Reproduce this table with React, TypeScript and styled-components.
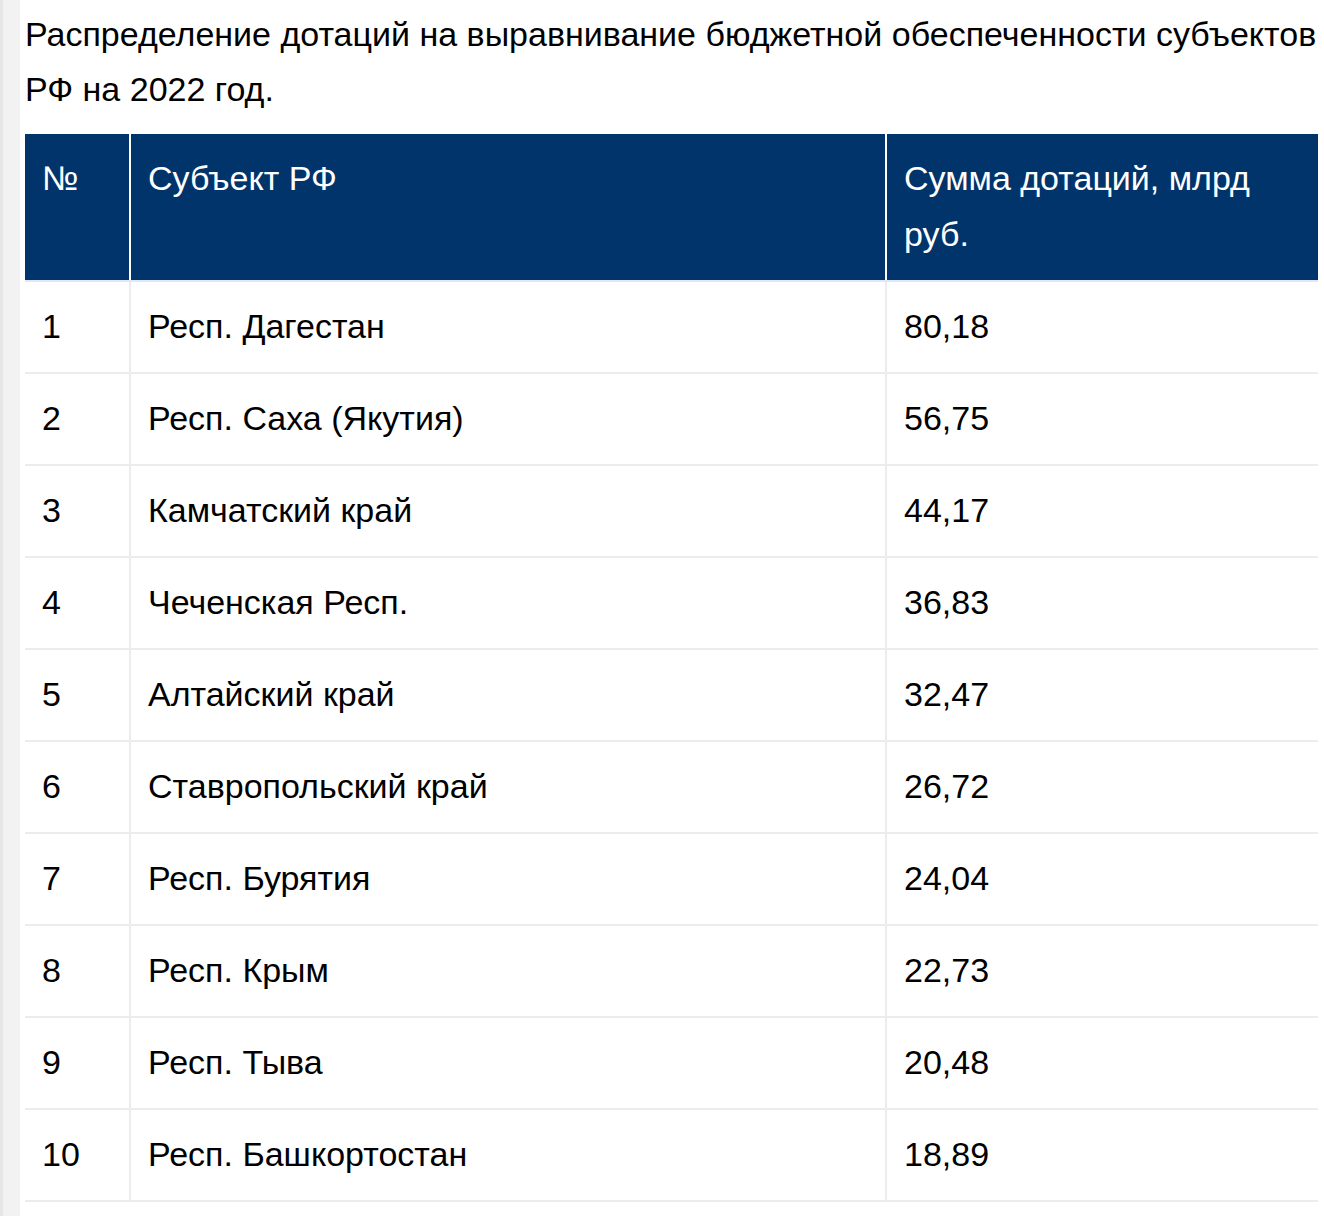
import styled, { createGlobalStyle } from "styled-components";

const GlobalStyle = createGlobalStyle`
  html, body {
    margin: 0;
    padding: 0;
    background: #ffffff;
  }
  body {
    font-family: "Liberation Sans", Arial, sans-serif;
    color: #000000;
  }
  * {
    box-sizing: border-box;
  }
`;

const Page = styled.div`
  display: flex;
  min-height: 1216px;
`;

const SideStrip = styled.div`
  width: 20px;
  flex-shrink: 0;
  background: #f2f2f2;
  border-left: 3px solid #e6e6e6;
`;

const Content = styled.div`
  flex: 1;
  padding: 7px 6px 0 5px;
`;

const Title = styled.p`
  margin: 0 0 17px 0;
  font-size: 34px;
  line-height: 55px;
  color: #000000;
`;

const Table = styled.table`
  width: 100%;
  border-collapse: collapse;
  table-layout: fixed;
`;

const HeadCell = styled.th<{ $w?: number; $last?: boolean }>`
  width: ${(p) => (p.$w ? `${p.$w}px` : "auto")};
  background: #00346a;
  color: #ffffff;
  font-weight: normal;
  text-align: left;
  vertical-align: top;
  font-size: 34px;
  line-height: 56px;
  padding: 16px 17px 18px;
  border-right: ${(p) => (p.$last ? "none" : "2px solid #ffffff")};
  border-bottom: 2px solid #dce9f6;
`;

const Cell = styled.td<{ $last?: boolean }>`
  font-size: 34px;
  line-height: 56px;
  padding: 16px 17px 18px;
  color: #000000;
  vertical-align: top;
  border-right: ${(p) => (p.$last ? "none" : "2px solid #ececec")};
  border-bottom: 2px solid #ececec;
`;

interface Region {
  n: number;
  name: string;
  sum: string;
}

const rows: Region[] = [
  { n: 1, name: "Респ. Дагестан", sum: "80,18" },
  { n: 2, name: "Респ. Саха (Якутия)", sum: "56,75" },
  { n: 3, name: "Камчатский край", sum: "44,17" },
  { n: 4, name: "Чеченская Респ.", sum: "36,83" },
  { n: 5, name: "Алтайский край", sum: "32,47" },
  { n: 6, name: "Ставропольский край", sum: "26,72" },
  { n: 7, name: "Респ. Бурятия", sum: "24,04" },
  { n: 8, name: "Респ. Крым", sum: "22,73" },
  { n: 9, name: "Респ. Тыва", sum: "20,48" },
  { n: 10, name: "Респ. Башкортостан", sum: "18,89" },
];

function App() {
  return (
    <>
      <GlobalStyle />
      <Page>
        <SideStrip />
        <Content>
          <Title>
            Распределение дотаций на выравнивание бюджетной обеспеченности
            субъектов РФ на 2022 год.
          </Title>
          <Table>
            <thead>
              <tr>
                <HeadCell $w={105}>№</HeadCell>
                <HeadCell $w={756}>Субъект РФ</HeadCell>
                <HeadCell $last>Сумма дотаций, млрд руб.</HeadCell>
              </tr>
            </thead>
            <tbody>
              {rows.map((r) => (
                <tr key={r.n}>
                  <Cell>{r.n}</Cell>
                  <Cell>{r.name}</Cell>
                  <Cell $last>{r.sum}</Cell>
                </tr>
              ))}
            </tbody>
          </Table>
        </Content>
      </Page>
    </>
  );
}

export default App;
